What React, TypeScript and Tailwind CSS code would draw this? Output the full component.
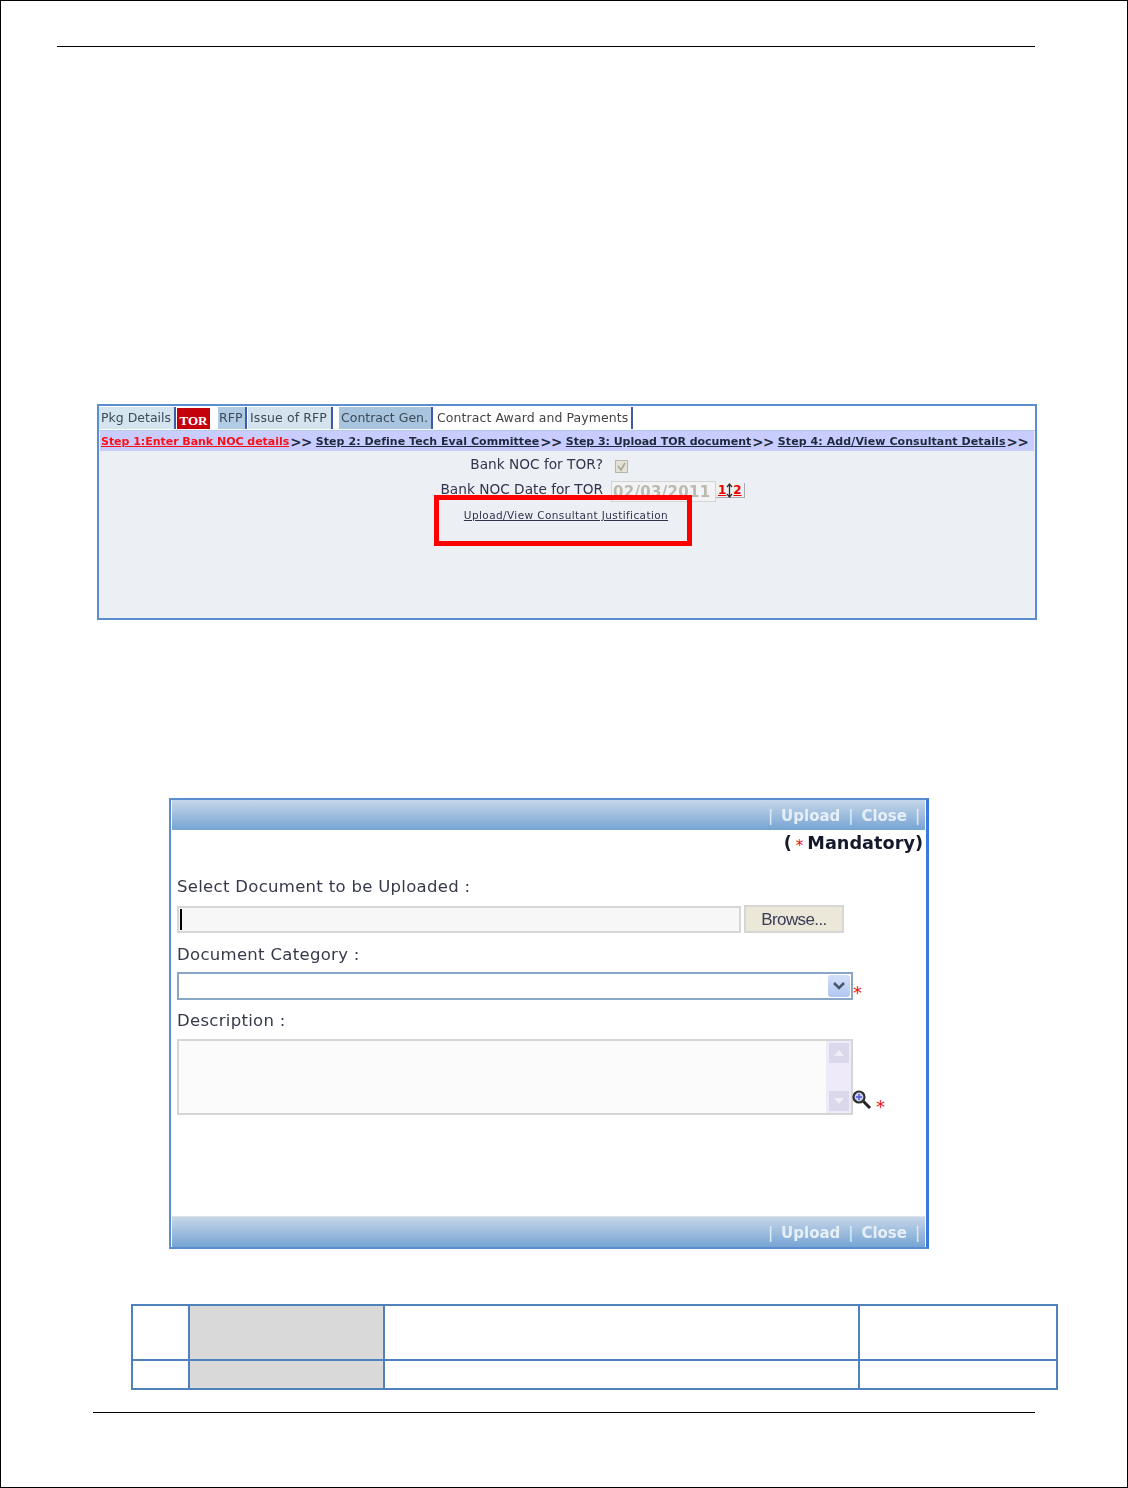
import React from "react";

const sans = "font-['DejaVu_Sans','Liberation_Sans',sans-serif]";

function Tab({ label, className = "" }: { label: string; className?: string }) {
  return (
    <div className={`flex h-[22px] items-center text-[12.5px] text-[#3d4a57] ${className}`}>
      <span className="blur-[0.3px]">{label}</span>
    </div>
  );
}

function ActionBar() {
  return (
    <div className="mx-px flex h-[30px] items-center justify-end gap-[8px] bg-gradient-to-b from-[#c6d6e8] to-[#76a4d3] pr-[5px] pt-[2px] text-[15px] font-bold text-[#e6eff8]">
      <span className="font-normal">|</span>
      <span className="blur-[0.3px]">Upload</span>
      <span className="font-normal">|</span>
      <span className="blur-[0.3px]">Close</span>
      <span className="font-normal">|</span>
    </div>
  );
}

function Step({ label, red, className = "" }: { label: string; red?: boolean; className?: string }) {
  return (
    <div className="flex items-center gap-px">
      <a className={`text-[11px] underline blur-[0.25px] ${red ? "text-[#fb1016]" : "text-[#1e2a3c]"} ${className}`}>{label}</a>
      <span className="text-[13.5px] tracking-[-0.5px] text-[#1e2a3c]">&gt;&gt;</span>
    </div>
  );
}

function Magnifier() {
  return (
    <svg width="20" height="20" viewBox="0 0 20 20" className="shrink-0">
      <circle cx="7" cy="7" r="5.500" fill="#cdd2f5" stroke="#2f2f2f" strokeWidth="2.200" />
      <path d="M4 7h6M7 4v6" stroke="#4b55e0" strokeWidth="1.500" />
      <path d="M11.500 11.500l6.500 6.500" stroke="#222" strokeWidth="3" />
    </svg>
  );
}

function ScrollButton({ up }: { up?: boolean }) {
  return (
    <div className="flex h-[20px] w-[20px] items-center justify-center bg-[#dbd8ec]">
      <svg width="12" height="8" viewBox="0 0 12 8">
        <path d={up ? "M6 1l5 6H1z" : "M6 7L1 1h10z"} fill="#f0eef9" />
      </svg>
    </div>
  );
}

function FieldLabel({ text, className = "" }: { text: string; className?: string }) {
  return (
    <div className={`ml-[6px] text-[16.500px] leading-[22px] tracking-[0.3px] text-[#36394a] blur-[0.3px] ${className}`}>{text}</div>
  );
}

export default function App() {
  return (
    <div className={`flex h-[1488px] w-[1128px] flex-col border border-black bg-white ${sans}`}>
      <div className="ml-[56px] mt-[45px] h-px w-[978px] shrink-0 bg-black" />

      {/* First screen */}
      <div className="relative ml-[96px] mt-[357px] flex h-[216px] w-[940px] shrink-0 flex-col border-2 border-[#5b8ecf] bg-[#ecf0f4]">
        <div className="flex h-[25px] items-end border-b border-[#b3cbe6] bg-white pb-[1px]">
          <Tab label="Pkg Details" className="w-[77px] border-r-2 border-[#3f5aa8] bg-[#d5e5f0] pl-[2px]" />
          <div className="ml-px flex h-[21px] w-[33px] items-center justify-center bg-[#c4000b] pt-[4px] font-['Liberation_Serif',serif] text-[13px] font-bold text-white">TOR</div>
          <Tab label="RFP" className="ml-[8px] w-[29px] border-r-2 border-[#3f5aa8] bg-[#b0cbe3] pl-[1px]" />
          <Tab label="Issue of RFP" className="ml-px w-[85px] border-r-2 border-[#3f5aa8] bg-[#d5e3ef] pl-[2px] tracking-[0.1px]" />
          <Tab label="Contract Gen." className="ml-[6px] w-[94px] border-r-2 border-[#3f5aa8] bg-[#a8c4de] pl-[2px]" />
          <Tab label="Contract Award and Payments" className="w-[200px] border-r-2 border-[#3f5aa8] pl-[4px] tracking-[0.08px] text-[#444]" />
        </div>
        <div className="mx-[1px] flex h-[20px] items-center gap-[4px] whitespace-nowrap bg-[#c8ccff] pl-[1px] pt-[3px] font-bold">
          <Step label="Step 1:Enter Bank NOC details" red className="tracking-[-0.03px]" />
          <Step label="Step 2: Define Tech Eval Committee" className="tracking-[0.05px]" />
          <Step label="Step 3: Upload TOR document" className="tracking-[-0.04px]" />
          <Step label="Step 4: Add/View Consultant Details" className="tracking-[0.09px]" />
        </div>
        <div className="mt-[1px] flex h-[24px] items-center">
          <div className="w-[504px] text-right text-[13.700px] text-[#33334d] blur-[0.3px]">Bank NOC for TOR?</div>
          <div className="ml-[12px] mt-[5px] flex h-[13px] w-[13px] items-center justify-center border border-[#b5b5a8] bg-[#e4e2d6] pt-[2px]">
            <svg width="11" height="11" viewBox="0 0 11 11"><path d="M2 4l3 4 4-7" fill="none" stroke="#a8a89a" strokeWidth="1.600" /></svg>
          </div>
        </div>
        <div className="flex h-[26px] items-center">
          <div className="w-[504px] text-right text-[13.700px] text-[#33334d] blur-[0.3px]">Bank NOC Date for TOR</div>
          <div className="ml-[8px] mt-[5px] flex h-[21px] w-[105px] items-center border border-[#d4d4d4] bg-[#f2f3f4] pl-[1px] pt-[2px] text-[15px] font-bold tracking-[0.3px] text-[#bdb9ae]"><span className="blur-[0.3px]">02/03/2011</span></div>
          <div className="mt-[3px] flex h-[15px] items-center border-b border-r border-[#aaa] bg-[#f0f0f0] px-[2px] text-[12px] font-bold leading-none">
            <span className="text-[#ee0000] underline">1</span>
            <svg width="7" height="15" viewBox="0 0 7 15"><path d="M3.500 1v13M1 4l2.500-3 2.500 3M1 11l2.500 3 2.500-3" fill="none" stroke="#333" strokeWidth="1.300" /></svg>
            <span className="text-[#ee0000] underline">2</span>
          </div>
        </div>
        <a className="mt-[6px] -translate-x-px self-center text-[10.500px] tracking-[0.4px] text-[#33334d] underline blur-[0.25px]">Upload/View Consultant Justification</a>
        <div className="pointer-events-none absolute left-[335px] top-[89px] h-[51px] w-[258px] border-[5px] border-[#ff0000]" />
      </div>

      {/* Second screen */}
      <div className="ml-[168px] mt-[178px] flex h-[451px] w-[760px] shrink-0 flex-col border-2 border-r-[3px] border-[#5b8ecf] border-r-[#3c79dd] bg-white">
        <ActionBar />
        <div className="flex h-[26px] items-center justify-end whitespace-nowrap pr-[3px] text-[17.700px] font-bold text-[#15192b]">
          <span className="blur-[0.3px]">(</span>
          <span className="mx-[4px] mt-[7px] text-[15px] font-normal leading-none text-[#ee1111]">*</span>
          <span className="blur-[0.3px]">Mandatory)</span>
        </div>
        <FieldLabel text="Select Document to be Uploaded :" className="mt-[20px]" />
        <div className="ml-[6px] mt-[7px] flex items-center gap-[3px]">
          <div className="flex h-[27px] w-[564px] items-center border-2 border-[#d6d6d6] bg-[#f7f7f7] pl-[1px]">
            <div className="h-[21px] w-[2px] bg-black" />
          </div>
          <div className="flex h-[28px] w-[100px] items-center justify-center border-2 border-[#d6d6d6] bg-[#ebe8da] pt-[2px] font-['Liberation_Sans',sans-serif] text-[17px] tracking-[-0.6px] text-[#3c3c55]"><span className="blur-[0.3px]">Browse...</span></div>
        </div>
        <FieldLabel text="Document Category :" className="mt-[11px]" />
        <div className="ml-[6px] mt-[6px] flex items-start">
          <div className="flex h-[28px] w-[676px] items-center justify-end border-2 border-[#8aa6c6] bg-white pr-[1px]">
            <div className="flex h-[22px] w-[22px] items-center justify-center rounded-[3px] bg-gradient-to-b from-[#d4e0fa] to-[#b2c6f0]">
              <svg width="14" height="10" viewBox="0 0 14 10"><path d="M2 2l5 5 5-5" fill="none" stroke="#46566f" strokeWidth="2.500" /></svg>
            </div>
          </div>
          <span className="mt-[7px] text-[18px] leading-[28px] text-[#ee1111]">*</span>
        </div>
        <FieldLabel text="Description :" className="mt-[3px]" />
        <div className="ml-[6px] mt-[7px] flex items-end">
          <div className="flex h-[76px] w-[676px] justify-end border-2 border-[#d6d6d6] bg-[#fbfbfb]">
            <div className="flex w-[25px] flex-col items-center justify-between bg-[#eeeafa] py-[2px]">
              <ScrollButton up />
              <ScrollButton />
            </div>
          </div>
          <div className="mb-[5px] -ml-[1px]"><Magnifier /></div>
          <span className="mb-[-2px] ml-[4px] text-[18px] leading-[20px] text-[#ee1111]">*</span>
        </div>
        <div className="flex-1" />
        <div className="mx-px h-px bg-[#dfe3e8]" />
        <ActionBar />
      </div>

      {/* Table */}
      <table className="ml-[130px] mt-[55px] h-[86px] w-[927px] shrink-0 table-fixed border-collapse border-2 border-[#4f81bd]">
        <colgroup>
          <col className="w-[57px]" />
          <col className="w-[195px]" />
          <col className="w-[475px]" />
          <col />
        </colgroup>
        <tbody>
          <tr className="h-[55px]">
            <td className="border-2 border-[#4f81bd]" />
            <td className="border-2 border-[#4f81bd] bg-[#d9d9d9]" />
            <td className="border-2 border-[#4f81bd]" />
            <td className="border-2 border-[#4f81bd]" />
          </tr>
          <tr>
            <td className="border-2 border-[#4f81bd]" />
            <td className="border-2 border-[#4f81bd] bg-[#d9d9d9]" />
            <td className="border-2 border-[#4f81bd]" />
            <td className="border-2 border-[#4f81bd]" />
          </tr>
        </tbody>
      </table>

      <div className="ml-[92px] mt-[22px] h-px w-[942px] shrink-0 bg-black" />
    </div>
  );
}
